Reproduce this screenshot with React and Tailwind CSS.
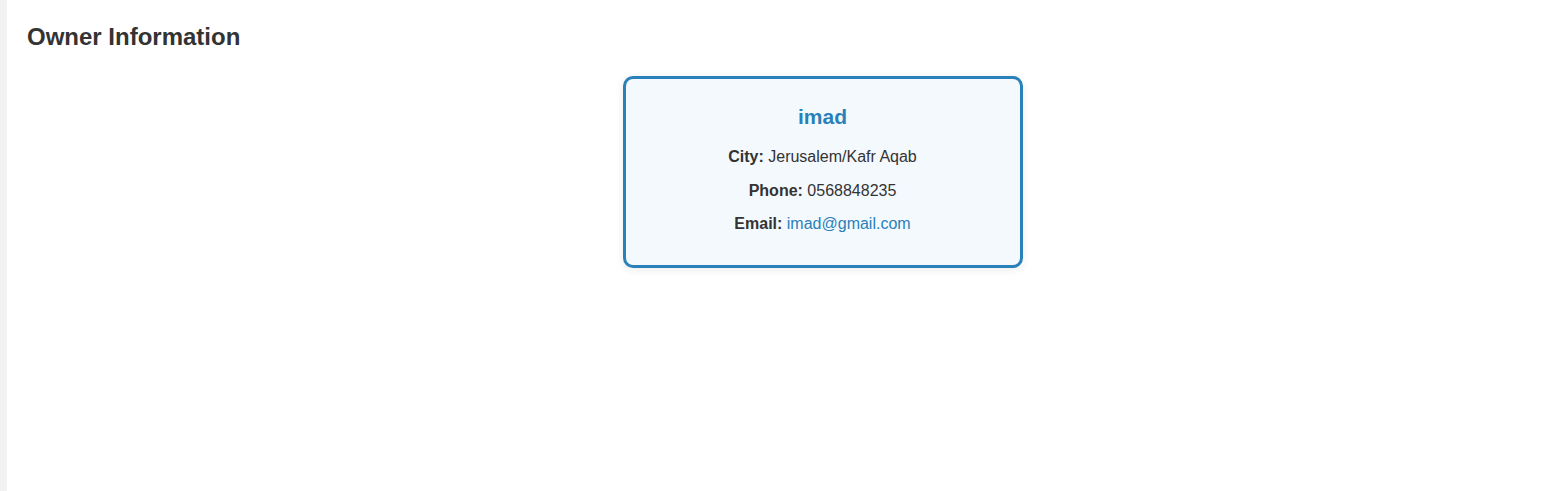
import React from 'react';

const owner = {
    name: 'imad',
    city: 'Jerusalem/Kafr Aqab',
    phone: '0568848235',
    email: 'imad@gmail.com',
};

const InfoRow = ({ label, children }) => (
    <p className="text-[16px] leading-[25.6px] text-[#333333]">
        <span className="font-bold">{label}:</span> {children}
    </p>
);

const App = () => {
    return (
        <div className="flex h-screen bg-white font-['Liberation_Sans',Arial,sans-serif]">
            {/* Sidebar edge */}
            <aside className="w-[7px] shrink-0 bg-[#f2f2f2]" />

            <main className="flex-1 px-5 pt-[23px]">
                <h2 className="text-[24px] leading-[28px] font-bold text-[#333333]">Owner Information</h2>

                <div className="flex justify-center pl-[70px] mt-[25px]">
                    <div className="w-[400px] rounded-[10px] border-[3px] border-[#2a80b9] bg-[#f4f9fe] pt-[25px] pb-[28px] text-center shadow-[0_2px_8px_rgba(0,0,0,0.08)]">
                        <h3 className="text-[21px] leading-[25px] font-bold text-[#2a80b9] mb-[15px]">{owner.name}</h3>
                        <div className="flex flex-col gap-2">
                            <InfoRow label="City">{owner.city}</InfoRow>
                            <InfoRow label="Phone">{owner.phone}</InfoRow>
                            <InfoRow label="Email">
                                <a href={`mailto:${owner.email}`} className="text-[#2a80b9]">{owner.email}</a>
                            </InfoRow>
                        </div>
                    </div>
                </div>
            </main>
        </div>
    );
};

export default App;
